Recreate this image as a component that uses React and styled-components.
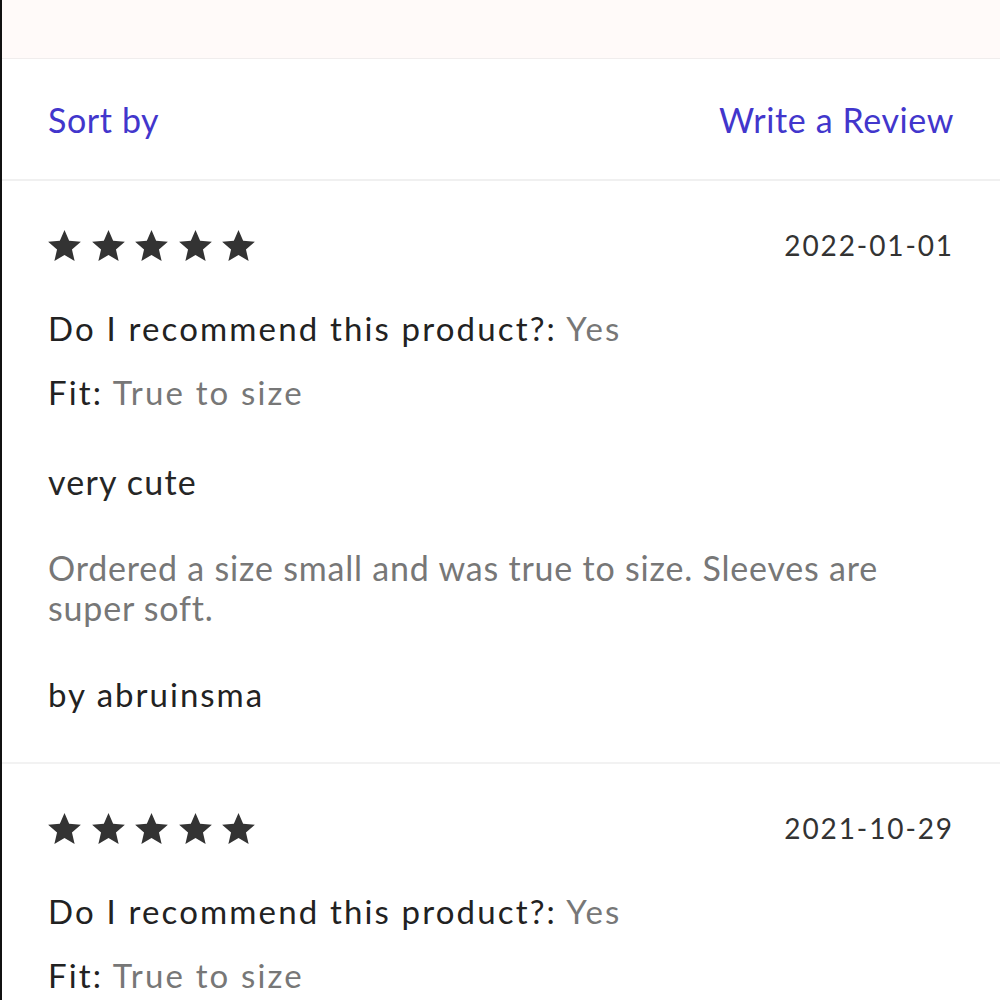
import React from "react";
import styled, { createGlobalStyle } from "styled-components";

const GlobalStyle = createGlobalStyle`
  html, body {
    margin: 0;
    padding: 0;
    background: #ffffff;
  }
  body {
    font-family: "Lato", "Noto Sans", sans-serif;
    color: #333333;
  }
`;

const reviews = [
  {
    id: 1,
    rating: 5,
    date: "2022-01-01",
    recommend: "Yes",
    fit: "True to size",
    title: "very cute",
    body: "Ordered a size small and was true to size. Sleeves are super soft.",
    author: "abruinsma",
  },
  {
    id: 2,
    rating: 5,
    date: "2021-10-29",
    recommend: "Yes",
    fit: "True to size",
    title: "love it",
    body: "Great quality, fits well.",
    author: "shopper",
  },
];

const Star = () => (
  <svg width="33" height="31" viewBox="1.25 1.6 21.5 20.35">
    <path
      d="M12 1.6l3.05 7.1 7.7.65-5.85 5.05 1.75 7.55L12 17.95 5.35 21.95 7.1 14.4 1.25 9.35l7.7-.65z"
      fill="#333333"
    />
  </svg>
);

const Stars = ({ count }) => (
  <StarRow>
    {Array.from({ length: count }).map((_, i) => (
      <Star key={i} />
    ))}
  </StarRow>
);

const ReviewCard = ({ rating, date, recommend, fit, title, body, author }) => {
  return (
    <Card>
      <CardTop>
        <Stars count={rating} />
        <DateText>{date}</DateText>
      </CardTop>
      <Meta $first>
        Do I recommend this product?: <MetaValue>{recommend}</MetaValue>
      </Meta>
      <Meta>
        Fit: <MetaValue>{fit}</MetaValue>
      </Meta>
      <Title>{title}</Title>
      <Body>{body}</Body>
      <Author>by {author}</Author>
    </Card>
  );
};

const App = () => {
  return (
    <Page>
      <GlobalStyle />
      <TopBand />
      <Toolbar>
        <LinkText>Sort by</LinkText>
        <LinkText>Write a Review</LinkText>
      </Toolbar>
      {reviews.map((r) => (
        <ReviewCard key={r.id} {...r} />
      ))}
    </Page>
  );
};

export default App;

const Page = styled.div`
  width: 1000px;
  height: 1000px;
  overflow: hidden;
  box-sizing: border-box;
  border-left: 2px solid #111111;
  background: #ffffff;
`;

const TopBand = styled.div`
  height: 58px;
  background: #fffaf9;
  border-bottom: 1px solid #f0eded;
`;

const Toolbar = styled.div`
  height: 120px;
  display: flex;
  justify-content: space-between;
  align-items: center;
  padding: 0 46px;
  border-bottom: 2px solid #f0f0f0;
`;

const LinkText = styled.span`
  font-family: "Lato", sans-serif;
  font-size: 34px;
  letter-spacing: 0.6px;
  color: #4236cc;
  cursor: pointer;
`;

const Card = styled.div`
  padding: 40px 46px 48px;
  border-bottom: 2px solid #f2f2f2;
`;

const CardTop = styled.div`
  display: flex;
  justify-content: space-between;
  align-items: center;
  height: 48px;
`;

const StarRow = styled.div`
  display: flex;
  gap: 10.5px;
`;

const DateText = styled.span`
  font-family: "Lato", sans-serif;
  font-size: 28px;
  letter-spacing: 1.9px;
  color: #333333;
`;

const Meta = styled.div`
  font-family: "Lato", sans-serif;
  font-size: 33px;
  line-height: 40px;
  letter-spacing: 2.15px;
  color: #222222;
  margin-top: ${(p) => (p.$first ? "39px" : "24px")};
`;

const MetaValue = styled.span`
  color: #777777;
`;

const Title = styled.div`
  font-family: "Lato", sans-serif;
  font-size: 34px;
  line-height: 40px;
  letter-spacing: 1.2px;
  color: #262626;
  margin-top: 50px;
`;

const Body = styled.p`
  font-family: "Lato", sans-serif;
  font-size: 34px;
  line-height: 40px;
  letter-spacing: 0.8px;
  color: #777777;
  margin: 46px 0 0;
  max-width: 890px;
`;

const Author = styled.div`
  font-family: "Lato", sans-serif;
  font-size: 33px;
  line-height: 40px;
  letter-spacing: 2px;
  color: #222222;
  margin-top: 46px;
`;
